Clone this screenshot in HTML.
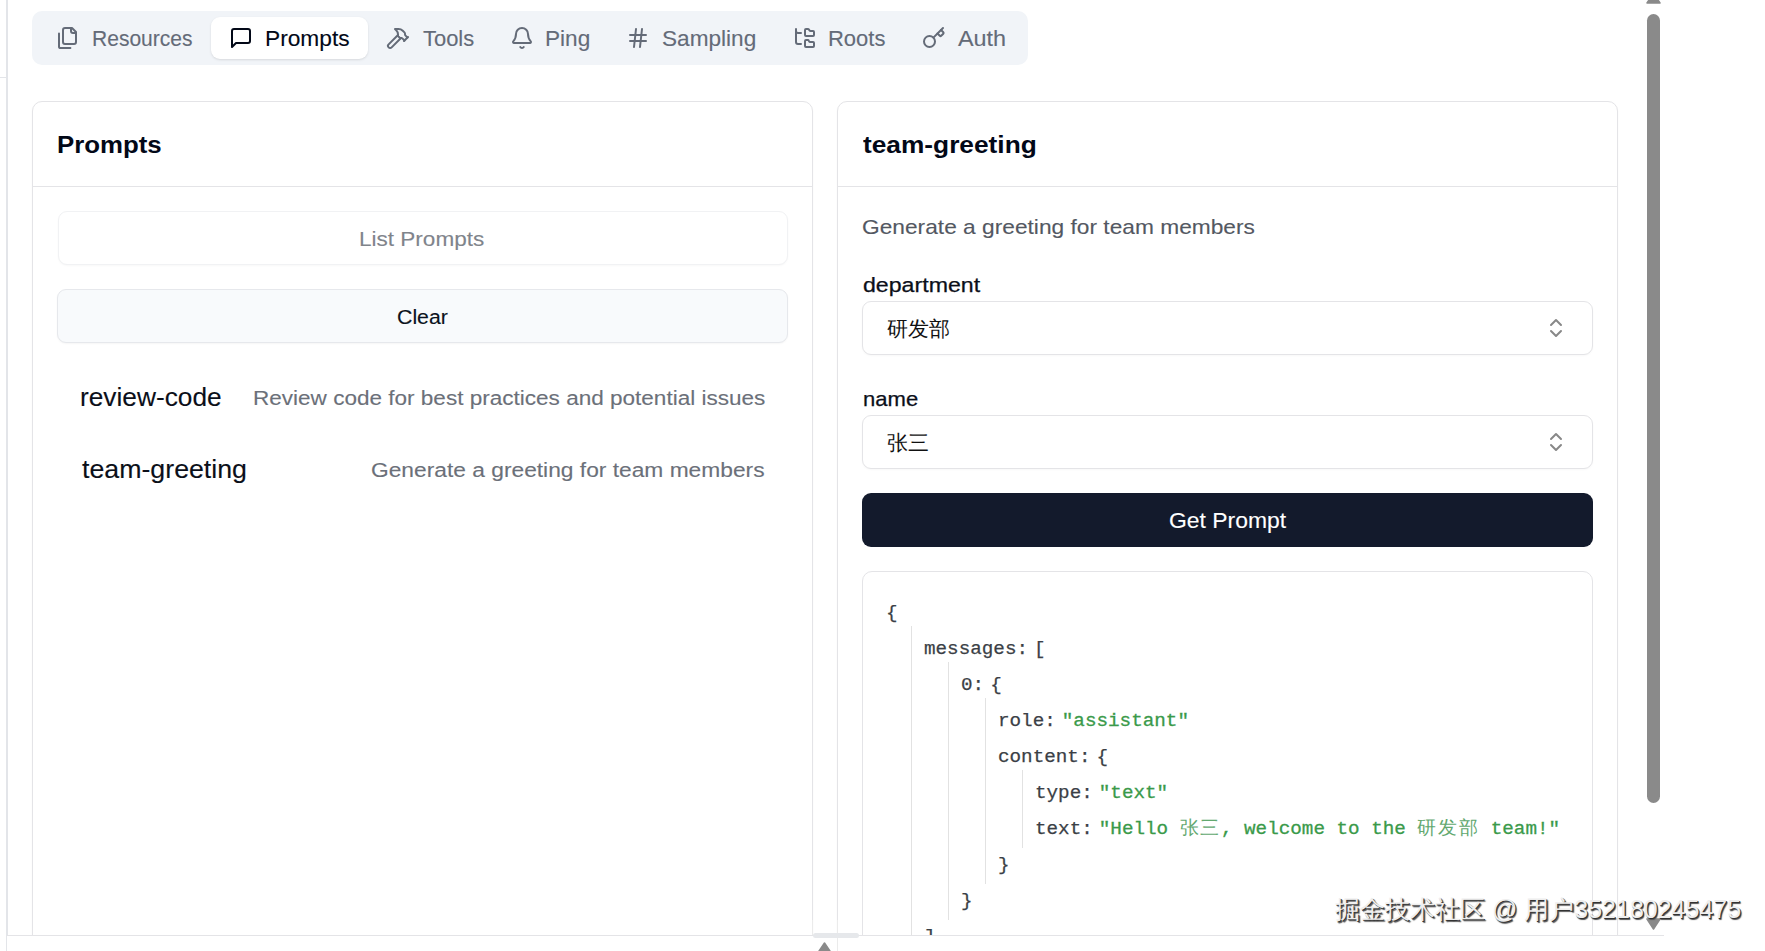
<!DOCTYPE html>
<html><head><meta charset="utf-8">
<style>
*{box-sizing:border-box;margin:0;padding:0}
html,body{width:1765px;height:951px;overflow:hidden;background:#fff}
body{position:relative;font-family:"Liberation Sans",sans-serif;color:#020817}
.abs{position:absolute}
.t{position:absolute;white-space:nowrap;line-height:1;transform-origin:0 0}
.sidebar-line{left:6px;top:0;width:1.5px;height:951px;background:#e3e5e9}
.tabbar{left:32px;top:11px;width:996px;height:54px;background:#f1f4f8;border-radius:10px}
.tab-active{left:211px;top:17px;width:157px;height:42px;background:#fff;border-radius:9px;box-shadow:0 1px 3px rgba(0,0,0,.08),0 1px 2px rgba(0,0,0,.04)}
.ico{position:absolute;top:26px;width:24px;height:24px}
.tabtxt{font-size:21px;color:#64748b;top:29px}
.panel{border:1px solid #e4e4e7;border-radius:10px;background:#fff;box-shadow:0 1px 2px rgba(0,0,0,.04)}
.hdiv{height:1px;background:#e4e4e7}
.btn{border:1px solid #eceef1;border-radius:9px;background:#fff;box-shadow:0 1px 2px rgba(0,0,0,.04)}
.sel{border:1px solid #e4e4e7;border-radius:9px;background:#fff;box-shadow:0 1px 2px rgba(0,0,0,.03)}
.mono{font-family:"Liberation Mono",monospace;font-size:19.27px;color:#3b3f46;-webkit-text-stroke:0.25px #3b3f46}
.str{color:#3a9a4a;-webkit-text-stroke:0.3px #3a9a4a}
.cjk{letter-spacing:1.57px;color:#62a86f;-webkit-text-stroke:0 transparent}
.guide{position:absolute;width:1px;background:#e2e2e2}
</style></head>
<body>
<div class="abs sidebar-line"></div>
<div class="abs" style="left:0;top:77px;width:6px;height:1px;background:#e3e5e9"></div>

<!-- Tab bar -->
<div class="abs tabbar"></div>
<div class="abs tab-active"></div>

<!-- Resources icon (files) -->
<svg class="ico" style="left:56px" viewBox="0 0 24 24" fill="none" stroke="#646b78" stroke-width="2" stroke-linecap="round" stroke-linejoin="round"><path d="M20 7h-3a2 2 0 0 1-2-2V2"/><path d="M9 18a2 2 0 0 1-2-2V4a2 2 0 0 1 2-2h7l4 4v10a2 2 0 0 1-2 2Z"/><path d="M3 7.6v12.8A1.6 1.6 0 0 0 4.6 22h9.8"/></svg>

<!-- Prompts icon -->
<svg class="ico" style="left:229px" viewBox="0 0 24 24" fill="none" stroke="#020817" stroke-width="2" stroke-linecap="round" stroke-linejoin="round"><path d="M21 15a2 2 0 0 1-2 2H7l-4 4V5a2 2 0 0 1 2-2h14a2 2 0 0 1 2 2z"/></svg>

<!-- Tools icon hammer -->
<svg class="ico" style="left:386px" viewBox="0 0 24 24" fill="none" stroke="#646b78" stroke-width="2" stroke-linecap="round" stroke-linejoin="round"><path d="m15 12-9.373 9.373a1 1 0 0 1-3.001-3L12 9"/><path d="m18 15 4-4"/><path d="m21.5 11.5-1.914-1.914A2 2 0 0 1 19 8.172v-.344a2 2 0 0 0-.586-1.414l-1.657-1.657A6 6 0 0 0 12.516 3H9l1.243 1.243A6 6 0 0 1 12 8.485V10l2 2h1.172a2 2 0 0 1 1.414.586L18.5 14.5"/></svg>
<!-- Ping bell -->
<svg class="ico" style="left:510px" viewBox="0 0 24 24" fill="none" stroke="#646b78" stroke-width="2" stroke-linecap="round" stroke-linejoin="round"><path d="M10.268 21a2 2 0 0 0 3.464 0"/><path d="M3.262 15.326A1 1 0 0 0 4 17h16a1 1 0 0 0 .74-1.673C19.41 13.956 18 12.499 18 8A6 6 0 0 0 6 8c0 4.499-1.411 5.956-2.738 7.326"/></svg>

<!-- Sampling hash -->
<svg class="ico" style="left:626px" viewBox="0 0 24 24" fill="none" stroke="#646b78" stroke-width="2" stroke-linecap="round" stroke-linejoin="round"><line x1="4" x2="20" y1="9" y2="9"/><line x1="4" x2="20" y1="15" y2="15"/><line x1="10" x2="8" y1="3" y2="21"/><line x1="16" x2="14" y1="3" y2="21"/></svg>

<!-- Roots folder tree -->
<svg class="ico" style="left:793px" viewBox="0 0 24 24" fill="none" stroke="#646b78" stroke-width="2" stroke-linecap="round" stroke-linejoin="round"><path d="M20 10a1 1 0 0 0 1-1V6a1 1 0 0 0-1-1h-2.5a1 1 0 0 1-.8-.4l-.9-1.2A1 1 0 0 0 15 3h-2a1 1 0 0 0-1 1v5a1 1 0 0 0 1 1Z"/><path d="M20 21a1 1 0 0 0 1-1v-3a1 1 0 0 0-1-1h-2.9a1 1 0 0 1-.88-.55l-.42-.85a1 1 0 0 0-.92-.6H13a1 1 0 0 0-1 1v5a1 1 0 0 0 1 1Z"/><path d="M3 5a2 2 0 0 0 2 2h3"/><path d="M3 3v13a2 2 0 0 0 2 2h3"/></svg>

<!-- Auth key -->
<svg class="ico" style="left:922px" viewBox="0 0 24 24" fill="none" stroke="#646b78" stroke-width="2" stroke-linecap="round" stroke-linejoin="round"><path d="m15.5 7.5 2.3 2.3a1 1 0 0 0 1.4 0l2.1-2.1a1 1 0 0 0 0-1.4L19 4"/><path d="m21 2-9.6 9.6"/><circle cx="7.5" cy="15.5" r="5.5"/></svg>

<!-- Left panel -->
<div class="abs panel" style="left:32px;top:101px;width:781px;height:900px"></div>
<div class="abs hdiv" style="left:33px;top:186px;width:779px"></div>
<div class="abs btn" style="left:58px;top:211px;width:730px;height:54px;border-color:#f1f2f4;box-shadow:0 1px 2px rgba(0,0,0,.03)"></div>
<div class="abs btn" style="left:57px;top:289px;width:731px;height:54px;background:#f8fafc;border-color:#e6e8ec"></div>


<!-- Right panel -->
<div class="abs panel" style="left:837px;top:101px;width:781px;height:900px"></div>
<div class="abs hdiv" style="left:838px;top:186px;width:779px"></div>
<div class="abs sel" style="left:862px;top:301px;width:731px;height:54px"></div>
<div class="t" style="left:887px;top:318px;font-size:21px;color:#111">研发部</div>
<svg class="abs" style="left:1544px;top:316px;width:24px;height:24px" viewBox="0 0 24 24" fill="none" stroke="#888" stroke-width="2" stroke-linecap="round" stroke-linejoin="round"><path d="m7 15 5 5 5-5"/><path d="m7 9 5-5 5 5"/></svg>
<div class="abs sel" style="left:862px;top:415px;width:731px;height:54px"></div>
<div class="t" style="left:887px;top:432px;font-size:21px;color:#111">张三</div>
<svg class="abs" style="left:1544px;top:430px;width:24px;height:24px" viewBox="0 0 24 24" fill="none" stroke="#888" stroke-width="2" stroke-linecap="round" stroke-linejoin="round"><path d="m7 15 5 5 5-5"/><path d="m7 9 5-5 5 5"/></svg>
<div class="abs" style="left:862px;top:493px;width:731px;height:54px;background:#131a2c;border-radius:9px"></div>

<!-- code box -->
<div class="abs panel" style="left:862px;top:571px;width:731px;height:500px;box-shadow:none"></div>
<div class="guide" style="left:911px;top:626px;height:309px"></div>
<div class="guide" style="left:948px;top:662px;height:258px"></div>
<div class="guide" style="left:985px;top:698px;height:186px"></div>
<div class="guide" style="left:1022px;top:770px;height:78px"></div>
<div class="t mono" style="left:886px;top:604px">{</div>
<div class="t mono" style="left:924px;top:640px">messages:<span style="margin-left:6px">[</span></div>
<div class="t mono" style="left:961px;top:676px">0:<span style="margin-left:6px">{</span></div>
<div class="t mono" style="left:998px;top:712px">role:<span class="str" style="margin-left:6px">"assistant"</span></div>
<div class="t mono" style="left:998px;top:748px">content:<span style="margin-left:6px">{</span></div>
<div class="t mono" style="left:1035px;top:784px">type:<span class="str" style="margin-left:6px">"text"</span></div>
<div class="t mono" style="left:1035px;top:820px">text:<span class="str" style="margin-left:6px">"Hello <span class="cjk">张三</span>, welcome to the <span class="cjk">研发部</span> team!"</span></div>
<div class="t mono" style="left:998px;top:856px">}</div>
<div class="t mono" style="left:961px;top:892px">}</div>
<div class="t mono" style="left:924px;top:928px">]</div>

<!-- bottom panel -->
<div class="abs" style="left:7px;top:935px;width:1657px;height:16px;background:#fff;border-top:1px solid #e4e4e7"></div>
<div class="abs" style="left:812px;top:920px;width:1px;height:15px;background:#ebebeb"></div>
<div class="abs" style="left:837px;top:920px;width:1px;height:31px;background:#ebebeb"></div>
<div class="abs" style="left:813px;top:933px;width:46px;height:5px;background:#e6e8eb;border-radius:3px"></div>
<svg class="abs" style="left:816px;top:942px;width:17px;height:12px" viewBox="0 0 17 12"><path d="M8.5 1 L16 12 L1 12 Z" fill="#8a8a8a" stroke="#8a8a8a" stroke-linejoin="round" stroke-width="1.5"/></svg>

<!-- scrollbar -->
<div class="abs" style="left:1647px;top:14px;width:13px;height:789px;background:#8a8a8a;border-radius:7px"></div>
<svg class="abs" style="left:1646px;top:-8px;width:15px;height:12px" viewBox="0 0 15 12"><path d="M7.5 1 L14 11 L1 11 Z" fill="#8a8a8a" stroke="#8a8a8a" stroke-linejoin="round" stroke-width="1.5"/></svg>
<svg class="abs" style="left:1646px;top:918px;width:15px;height:12px" viewBox="0 0 15 12"><path d="M1 1 L14 1 L7.5 11 Z" fill="#8a8a8a" stroke="#8a8a8a" stroke-linejoin="round" stroke-width="1.5"/></svg>

<div id="tab_res" class="t" style="left:92.18px;top:27.91px;font-size:22.12px;letter-spacing:0.000px;font-weight:400;color:#646b78;transform:scaleX(0.9513);-webkit-text-stroke:0.12px #646b78;">Resources</div>
<div id="tab_pro" class="t" style="left:264.98px;top:27.91px;font-size:22.12px;letter-spacing:0.000px;font-weight:400;color:#020817;transform:scaleX(1.0272);-webkit-text-stroke:0.12px #020817;">Prompts</div>
<div id="tab_too" class="t" style="left:422.58px;top:27.91px;font-size:22.12px;letter-spacing:0.000px;font-weight:400;color:#646b78;transform:scaleX(0.9917);-webkit-text-stroke:0.12px #646b78;">Tools</div>
<div id="tab_pin" class="t" style="left:544.78px;top:27.91px;font-size:22.12px;letter-spacing:0.000px;font-weight:400;color:#646b78;transform:scaleX(1.0220);-webkit-text-stroke:0.12px #646b78;">Ping</div>
<div id="tab_sam" class="t" style="left:662.41px;top:27.91px;font-size:22.11px;letter-spacing:0.000px;font-weight:400;color:#646b78;transform:scaleX(1.0221);-webkit-text-stroke:0.12px #646b78;">Sampling</div>
<div id="tab_roo" class="t" style="left:828.38px;top:27.91px;font-size:22.12px;letter-spacing:0.000px;font-weight:400;color:#646b78;transform:scaleX(0.9939);-webkit-text-stroke:0.12px #646b78;">Roots</div>
<div id="tab_aut" class="t" style="left:957.78px;top:27.91px;font-size:22.12px;letter-spacing:0.000px;font-weight:400;color:#646b78;transform:scaleX(1.0577);-webkit-text-stroke:0.12px #646b78;">Auth</div>
<div id="h_prompts" class="t" style="left:57.14px;top:133.01px;font-size:24.32px;letter-spacing:0.000px;font-weight:700;color:#020817;transform:scaleX(1.0620);">Prompts</div>
<div id="h_team" class="t" style="left:863.05px;top:132.81px;font-size:24.23px;letter-spacing:0.000px;font-weight:700;color:#020817;transform:scaleX(1.0850);">team-greeting</div>
<div id="b_list" class="t" style="left:359.23px;top:227.82px;font-size:21.07px;letter-spacing:0.000px;font-weight:400;color:#7f848b;transform:scaleX(1.0697);-webkit-text-stroke:0.12px #7f848b;">List Prompts</div>
<div id="b_clear" class="t" style="left:397.27px;top:305.70px;font-size:21.03px;letter-spacing:0.000px;font-weight:400;color:#0b1220;transform:scaleX(1.0133);-webkit-text-stroke:0.12px #0b1220;">Clear</div>
<div id="b_get" class="t" style="left:1169.24px;top:509.61px;font-size:22.60px;letter-spacing:0.000px;font-weight:400;color:#ffffff;transform:scaleX(1.0133);-webkit-text-stroke:0.12px #ffffff;">Get Prompt</div>
<div id="l_review" class="t" style="left:79.65px;top:385.01px;font-size:25.28px;letter-spacing:0.000px;font-weight:400;color:#0b0f19;transform:scaleX(1.0397);-webkit-text-stroke:0.12px #0b0f19;">review-code</div>
<div id="l_team" class="t" style="left:82.15px;top:456.81px;font-size:25.04px;letter-spacing:0.000px;font-weight:400;color:#0b0f19;transform:scaleX(1.0683);-webkit-text-stroke:0.12px #0b0f19;">team-greeting</div>
<div id="d_review" class="t" style="left:252.83px;top:388.00px;font-size:20.82px;letter-spacing:0.000px;font-weight:400;color:#6b7079;transform:scaleX(1.0828);-webkit-text-stroke:0.12px #6b7079;">Review code for best practices and potential issues</div>
<div id="d_team" class="t" style="left:370.83px;top:460.00px;font-size:20.82px;letter-spacing:0.000px;font-weight:400;color:#6b7079;transform:scaleX(1.0938);-webkit-text-stroke:0.12px #6b7079;">Generate a greeting for team members</div>
<div id="r_gen" class="t" style="left:862.25px;top:216.50px;font-size:20.80px;letter-spacing:0.000px;font-weight:400;color:#535862;transform:scaleX(1.0930);-webkit-text-stroke:0.12px #535862;">Generate a greeting for team members</div>
<div id="r_dept" class="t" style="left:862.54px;top:275.50px;font-size:19.88px;letter-spacing:0.000px;font-weight:400;color:#0b0f19;transform:scaleX(1.1657);-webkit-text-stroke:0.25px #0b0f19;">department</div>
<div id="r_name" class="t" style="left:862.86px;top:389.71px;font-size:19.62px;letter-spacing:0.000px;font-weight:400;color:#0b0f19;transform:scaleX(1.1242);-webkit-text-stroke:0.25px #0b0f19;">name</div>
<!-- watermark -->
<div class="t" style="left:1335px;top:897px;font-size:25px;color:#eeeeee;text-shadow:1px 1px 0 #333,1.5px 1.5px 1px #555">掘金技术社区 @ 用户352180245475</div>
</body></html>
